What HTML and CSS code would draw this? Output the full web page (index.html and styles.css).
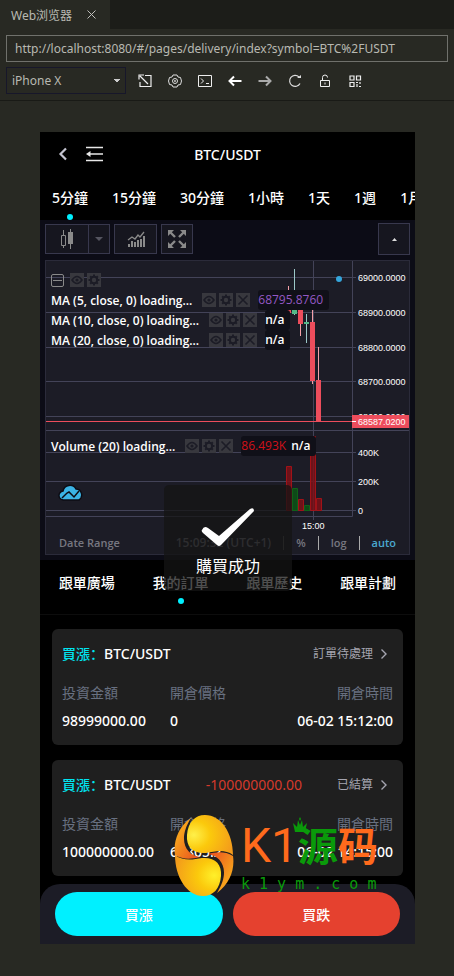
FILE: index.html
```
<!DOCTYPE html>
<html lang="zh">
<head>
    <meta charset="UTF-8">
    <meta name="viewport" content="width=device-width, initial-scale=1.0">
    <title>Web浏览器</title>
    <link rel="stylesheet" href="styles.css">
</head>
<body>
    <!-- shared icons -->
    <svg class="defs" width="0" height="0">
        <symbol id="eye" viewBox="0 0 14 14"><path d="M2 7q5-7 10 0q-5 7-10 0z" fill="none" stroke="#1c1c26" stroke-width="1.6"/><circle cx="7" cy="7" r="1.6" fill="#1c1c26"/></symbol>
        <symbol id="gear" viewBox="0 0 14 14"><circle cx="7" cy="7" r="3.2" fill="none" stroke="#1c1c26" stroke-width="2"/><path d="M7 1.5v2M7 10.5v2M1.5 7h2M10.5 7h2M3.2 3.2l1.4 1.4M9.4 9.4l1.4 1.4M3.2 10.8l1.4-1.4M9.4 4.6l1.4-1.4" stroke="#1c1c26" stroke-width="2"/></symbol>
        <symbol id="cross" viewBox="0 0 14 14"><path d="M2.5 2.5l9 9M11.5 2.5l-9 9" stroke="#1c1c26" stroke-width="1.6"/></symbol>
        <symbol id="chevron" viewBox="0 0 8 12"><path d="M1.5 1.5L6 6l-4.500 4.500" fill="none" stroke="#a5a5b0" stroke-width="1.4"/></symbol>
    </svg>

    <!-- Browser panel -->
    <header class="browser">
        <div class="tab-strip">
            <div class="tab">Web浏览器
                <button class="icon-btn" aria-label="关闭"><svg width="9" height="9" viewBox="0 0 9 9"><path d="M.5.5l8 8M8.500.5l-8 8" stroke="#c0c0bc"/></svg></button>
            </div>
        </div>
        <input class="url" type="text" aria-label="URL" value="http://localhost:8080/#/pages/delivery/index?symbol=BTC%2FUSDT">
        <div class="tools">
            <select class="device" aria-label="Device">
                <option>iPhone X</option>
            </select>
            <button class="icon-btn" aria-label="Open"><svg width="14" height="14" viewBox="0 0 14 14" fill="none" stroke="#eee"><path d="M7 1.500h6v11h-11V8M2 2l8 8M1 5.500V1h5" stroke-width="1.200"/></svg></button>
            <button class="icon-btn" aria-label="Settings"><svg width="14" height="14" viewBox="0 0 14 14" fill="none" stroke="#ddd"><path d="M5 1h4l1 2 2.500.5 1 3.500-1 3.500L10 11l-1 2H5l-1-2-2.500-.5L.5 7l1-3.500L4 3z"/><circle cx="7" cy="7" r="2.500"/><circle cx="7" cy="7" r=".6"/></svg></button>
            <button class="icon-btn" aria-label="Console"><svg width="14" height="14" viewBox="0 0 14 14" fill="none" stroke="#eee"><path d="M.5 1.500h13v11H.5zM3 4.500L5.500 7 3 9.500M8 9.500h3"/></svg></button>
            <button class="icon-btn" aria-label="Back"><svg width="14" height="14" viewBox="0 0 14 14" fill="none" stroke="#fff" stroke-width="2"><path d="M13.500 7H2M6 2.500L1.500 7 6 11.500"/></svg></button>
            <button class="icon-btn" aria-label="Forward"><svg width="14" height="14" viewBox="0 0 14 14" fill="none" stroke="#aaa" stroke-width="2"><path d="M.5 7H12M8 2.500L12.500 7 8 11.500"/></svg></button>
            <button class="icon-btn" aria-label="Reload"><svg width="14" height="14" viewBox="0 0 14 14" fill="none" stroke="#ddd" stroke-width="1.200"><path d="M12 9.500A5.500 5.500 0 1 1 11 3"/><path d="M9 4h4V1z" fill="#ddd" stroke="none"/></svg></button>
            <button class="icon-btn" aria-label="Lock"><svg width="14" height="14" viewBox="0 0 14 14" fill="none" stroke="#eee"><path d="M2.500 6.500h9v6h-9zM4.500 6V3.500q0-2.500 2.500-2.500t2.500 2.500M7 8.500v2"/></svg></button>
            <button class="icon-btn" aria-label="QR"><svg width="14" height="14" viewBox="0 0 14 14" fill="none" stroke="#eee" stroke-width="1.200"><path d="M2 2h4v4H2zM8.500 2h4v4h-4zM2 8.500h4v4H2zM8 8.500h2M12 8v2M9 10v3M11 12.500h2"/></svg></button>
        </div>
    </header>

    <main class="phone">
        <div class="nav">
            <button class="icon-btn" aria-label="返回"><svg width="10" height="14" viewBox="0 0 10 14"><path d="M8 1.500L2.500 7 8 12.500" fill="none" stroke="#c4c4d0" stroke-width="2.200"/></svg></button>
            <button class="icon-btn" aria-label="選單"><svg width="17" height="16" viewBox="0 0 17 16"><path d="M0 1.500h17M4 8h13M0 14.500h17" stroke="#e8e8e8" stroke-width="1.600"/><path d="M0 8l4.500-3v6z" fill="#e8e8e8"/></svg></button>
            <h1>BTC/USDT</h1>
        </div>

        <nav class="periods">
            <a href="#" class="active">5分鐘</a>
            <a href="#">15分鐘</a>
            <a href="#">30分鐘</a>
            <a href="#">1小時</a>
            <a href="#">1天</a>
            <a href="#">1週</a>
            <a href="#">1月</a>
        </nav>

        <!-- Chart widget -->
        <section class="widget">
            <div class="chart-tools">
                <div class="split">
                    <button aria-label="Candles"><svg width="14" height="20" viewBox="0 0 14 20"><path d="M3.500 1v18M10.500 0v20" stroke="#8a8a8a"/><path d="M1.500 6.500h4v10h-4z" fill="#16161f" stroke="#8a8a8a"/><path d="M8 3h5v12H8z" fill="#8a8a8a"/></svg></button>
                    <button class="narrow" aria-label="More"><svg width="8" height="4" viewBox="0 0 8 4"><path d="M0 0h8L4 4z" fill="#555560"/></svg></button>
                </div>
                <button class="indicators" aria-label="Indicators"><svg width="18" height="16" viewBox="0 0 18 16"><path d="M2 16v-3M5 16v-6M8 16v-5M11 16V9M14 16V8M17 16V5" stroke="#8a8a8a" stroke-width="2"/><path d="M1 9l4-3 3 2 3-4 2 2 4-5" fill="none" stroke="#8a8a8a" stroke-width="1.300"/></svg></button>
                <button class="full" aria-label="Fullscreen"><svg width="18" height="18" viewBox="0 0 18 18"><path d="M0 0h6L0 6zM18 0v6l-6-6zM0 18v-6l6 6zM18 18h-6l6-6z" fill="#8a8a8a"/><path d="M2 2l5 5M16 2l-5 5M2 16l5-5M16 16l-5-5" stroke="#8a8a8a" stroke-width="2.400"/></svg></button>
                <button class="collapse" aria-label="Collapse"><svg width="5" height="3" viewBox="0 0 5 3"><path d="M0 3h5L2.500 0z" fill="#ddd"/></svg></button>
            </div>

            <div class="chart">
                <svg class="plot" viewBox="0 0 363 270">
                    <g stroke="#434358">
                        <path d="M0 16.500H310M0 51.500H310M0 86.500H310M0 120.500H310M0 155.500H310M0 191.500H310M0 220.500H310M0 249.500H310"/>
                        <path d="M0 169.500H363M0 255.500H306.500M267.500 0V259M306.500 0V255.500"/>
                    </g>
                    <g>
                        <path d="M242.500 25V52M254.500 45V75M266.500 47V123M272.500 86V120" stroke="#f5a0a8"/>
                        <path d="M248.500 8V54M260.500 53V82" stroke="#9cc8c8"/>
                    </g>
                    <path d="M240 38h5v14h-5zM252 46h5v17h-5zM264 61h5v59h-5zM270 119h5v41h-5z" fill="#ed4d5c"/>
                    <path d="M246 49h5v4h-5zM258 61h5v2h-5z" fill="#53b987"/>
                    <path d="M0 160.500H306" stroke="#ed4d5c"/>
                    <path d="M240.500 205.500h5v44h-5zM252.500 238.500h5v11h-5zM264.500 175.500h5v74h-5zM270.500 237.500h5v12h-5z" stroke="#a11218" fill="#7d1018" fill-opacity=".85"/>
                    <path d="M246.500 227.500h5v22h-5zM258.500 244.500h5v5h-5z" stroke="#0f6218" fill="#0e4a18"/>
                    <circle cx="293" cy="18" r="3" fill="#35a6dc"/>
                    <g class="axis">
                        <text x="312" y="20">69000.0000</text>
                        <text x="312" y="55">68900.0000</text>
                        <text x="312" y="90">68800.0000</text>
                        <text x="312" y="124">68700.0000</text>
                        <text x="312" y="159">68600.0000</text>
                        <text x="312" y="195">400K</text>
                        <text x="312" y="224">200K</text>
                        <text x="312" y="253">0</text>
                        <text x="256" y="268">15:00</text>
                        <path d="M306 154h57v13h-57z" fill="#ed4d5c"/>
                        <text x="312" y="164">68587.0200</text>
                        <path d="M306 160.500h4" stroke="#fff"/>
                    </g>
                </svg>

                <div class="legend">
                    <div class="row">
                        <span class="minus"></span>
                        <span class="acts"><svg><use href="#eye"/></svg><svg><use href="#gear"/></svg></span>
                    </div>
                    <div class="row">MA (5, close, 0) loading...
                        <span class="acts"><svg><use href="#eye"/></svg><svg><use href="#gear"/></svg><svg><use href="#cross"/></svg></span>
                        <span class="val purple">68795.8760</span>
                    </div>
                    <div class="row">MA (10, close, 0) loading...
                        <span class="acts"><svg><use href="#eye"/></svg><svg><use href="#gear"/></svg><svg><use href="#cross"/></svg></span>
                        <span class="val">n/a</span>
                    </div>
                    <div class="row">MA (20, close, 0) loading...
                        <span class="acts"><svg><use href="#eye"/></svg><svg><use href="#gear"/></svg><svg><use href="#cross"/></svg></span>
                        <span class="val">n/a</span>
                    </div>
                </div>
                <div class="legend volume">
                    <div class="row">Volume (20) loading...
                        <span class="acts"><svg><use href="#eye"/></svg><svg><use href="#gear"/></svg><svg><use href="#cross"/></svg></span>
                        <span class="val"><span class="red">86.493K</span> n/a</span>
                    </div>
                </div>
                <svg class="cloud" width="26" height="18" viewBox="0 0 26 18"><path d="M6 16a4.500 4.500 0 0 1-1-9 7 7 0 0 1 13-2 6 6 0 0 1 3 11z" fill="#3bb3e4" stroke="#0c0c14" stroke-width="1.500"/><path d="M4 14l5-5 2-1 5 5 5-6" fill="none" stroke="#0c0c14" stroke-width="1.500"/></svg>

                <div class="chart-foot">
                    <span class="range">Date Range</span>
                    <span class="clock">15:09:32 (UTC+1)</span>
                    <span class="pct">%</span>
                    <span class="log">log</span>
                    <span class="auto">auto</span>
                </div>
            </div>
        </section>

        <nav class="orders-nav">
            <a href="#">跟單廣場</a>
            <a href="#" class="active">我的訂單</a>
            <a href="#">跟單歷史</a>
            <a href="#">跟單計劃</a>
        </nav>

        <section class="orders">
            <article class="card">
                <div class="card-head">
                    <div><b>買漲：</b>BTC/USDT</div>
                    <a href="#">訂單待處理<svg width="8" height="12"><use href="#chevron"/></svg></a>
                </div>
                <div class="card-grid">
                    <span class="label">投資金額</span><span class="label">開倉價格</span><span class="label">開倉時間</span>
                    <span>98999000.00</span><span>0</span><span>06-02 15:12:00</span>
                </div>
            </article>
            <article class="card">
                <div class="card-head">
                    <div><b>買漲：</b>BTC/USDT</div>
                    <div class="loss">-100000000.00</div>
                    <a href="#">已結算<svg width="8" height="12"><use href="#chevron"/></svg></a>
                </div>
                <div class="card-grid">
                    <span class="label">投資金額</span><span class="label">開倉價格</span><span class="label">開倉時間</span>
                    <span>100000000.00</span><span>68805.2</span><span>06-02 14:15:00</span>
                </div>
            </article>
        </section>

        <footer class="trade">
            <button class="up">買漲</button>
            <button class="down">買跌</button>
        </footer>

        <!-- Toast -->
        <div class="toast" role="status">
            <svg width="54" height="40" viewBox="0 0 54 40"><path d="M1 23q2-5 6-2l11 8L49 2q4-2 4 2L20 38q-2 2-4 0L2 26q-2-2-1-3z" fill="#fff"/></svg>
            購買成功
        </div>

        <!-- Site watermark -->
        <div class="watermark">
            <svg width="60" height="81" viewBox="0 0 60 81">
                <defs>
                    <radialGradient id="goldTop" cx=".15" cy=".5" r=".9"><stop offset="0" stop-color="#fff04a"/><stop offset=".4" stop-color="#fbc90c"/><stop offset="1" stop-color="#f39a1c"/></radialGradient>
                    <radialGradient id="goldLow" cx=".85" cy=".5" r=".9"><stop offset="0" stop-color="#fff02a"/><stop offset=".4" stop-color="#fbc90c"/><stop offset="1" stop-color="#f39a1c"/></radialGradient>
                    <linearGradient id="emberL" x1="0" y1="0" x2="1" y2="1"><stop offset=".3" stop-color="#f7a01c"/><stop offset="1" stop-color="#e84a20"/></linearGradient>
                    <linearGradient id="emberR" x1="1" y1="1" x2="0" y2="0"><stop offset=".3" stop-color="#f7a01c"/><stop offset="1" stop-color="#e84a20"/></linearGradient>
                </defs>
                <!-- dark gaps between the two drops -->
                <path d="M17 4C6 12 6 32 17 42L14 18zM43 77c11-8 11-28 0-38l3 24z" fill="#1f1f1f"/>
                <path d="M17 3C4 12-1 27 1 40c8 5 17 4 25 2C12 40 3 25 17 3z" fill="url(#emberL)"/>
                <path d="M43 78c13-9 18-24 16-37-8-5-17-4-25-2 14 2 23 17 9 39z" fill="url(#emberR)"/>
                <path d="M13 20C14 7 21 0 31 0c16 0 28 18 28 40-8-6-17-4-27-2-13 1-20-6-19-18z" fill="url(#goldTop)"/>
                <path d="M47 61c-1 13-8 20-18 20C13 81 1 62 1 40c8 6 17 5 27 3 13-1 20 6 19 18z" fill="url(#goldLow)"/>
            </svg>
            <div class="mark">
                <div class="mark-name">
                    <span class="latin">K1</span><span class="green">源</span><span>码</span>
                    <svg class="crown" width="16" height="16" viewBox="0 0 16 16"><path d="M3 15L1 6l4 4 1-7 2 5 2-5 1 7 4-4-2 9zM7 2l1-2 1 2-1 2z" fill="#0a9a0a"/></svg>
                </div>
                <div class="mark-url">k 1 y m . c o m</div>
            </div>
        </div>
    </main>
</body>
</html>
```

FILE: styles.css
```
* {
    box-sizing: border-box;
}

body {
    margin: 0;
    background-color: #282923;
    color: #fff;
    font-family: "Noto Sans", "Noto Sans CJK SC", sans-serif;
    font-size: 14px;
}

a {
    color: inherit;
    text-decoration: none;
}

button {
    font: inherit;
    color: inherit;
    padding: 0;
    border: none;
    background: none;
    cursor: pointer;
}

button svg {
    display: block;
}

.defs {
    position: absolute;
}

/* Browser panel */
.browser {
    height: 101px;
    border-bottom: 1px solid #191a16;
    color: #b8b9b2;
}

.tab-strip {
    height: 29px;
    background-color: #1c1d19;
}

.tab {
    display: flex;
    align-items: center;
    gap: 15px;
    width: 110px;
    height: 29px;
    padding-left: 11px;
    background-color: #282923;
    font-size: 12px;
}

.url {
    display: block;
    width: calc(100% - 12px);
    height: 27px;
    margin: 6px 6px 5px;
    padding: 0 8px;
    border: 1px solid #70716c;
    background: none;
    color: #b8b9b2;
    font-family: "Noto Sans", sans-serif;
    font-size: 12px;
}

.tools {
    display: flex;
    align-items: center;
    gap: 16px;
    padding: 0 6px;
}

.device {
    width: 120px;
    height: 27px;
    margin-right: -4px;
    padding: 0 5px;
    border: 1px solid #17172a;
    appearance: none;
    background: linear-gradient(to bottom right, #ccc 50%, transparent 50%) 110px 11px / 3px 4px no-repeat,
        linear-gradient(to bottom left, #ccc 50%, transparent 50%) 107px 11px / 3px 4px no-repeat;
    color: #b8b9b2;
    font-family: "Noto Sans", sans-serif;
    font-size: 12px;
}

/* Phone */
.phone {
    position: relative;
    height: 812px;
    margin: 31px 39px 32px 40px;
    background-color: #000;
    overflow: hidden;
}

.nav {
    display: flex;
    align-items: center;
    gap: 18px;
    height: 44px;
    padding: 0 18px;
}

.nav h1 {
    flex: 1;
    margin: 0 45px 0 -18px;
    font-size: 14px;
    font-weight: 500;
    text-align: center;
}

.periods {
    display: flex;
    gap: 24px;
    height: 44px;
    padding: 0 12px;
    line-height: 44px;
    white-space: nowrap;
    overflow: hidden;
}

.periods a,
.orders-nav a {
    position: relative;
    font-weight: 500;
}

.periods .active::after,
.orders-nav .active::after {
    content: "";
    position: absolute;
    left: 50%;
    bottom: 0;
    width: 6px;
    height: 6px;
    margin-left: -3px;
    border-radius: 50%;
    background-color: #00f0ff;
}

/* Chart */
.widget {
    height: 340px;
    padding: 3px 5px 5px;
    background-color: #0c0c16;
}

.chart-tools {
    display: flex;
    align-items: center;
    gap: 4px;
    height: 32px;
    margin-bottom: 5px;
}

.chart-tools button {
    display: flex;
    align-items: center;
    justify-content: center;
    height: 30px;
    border: 1px solid #38384d;
    background-color: #16161f;
}

.split {
    display: flex;
}

.split button {
    width: 44px;
}

.indicators {
    width: 43px;
}

.split .narrow {
    width: 21px;
    border-left: none;
}

.chart-tools .full {
    width: 32px;
}

.chart-tools .collapse {
    width: 32px;
    height: 32px;
    margin-left: auto;
}

.chart {
    position: relative;
    height: 295px;
    border: 1px solid #2b2b3a;
    background-color: #1c1c26;
}

.plot {
    display: block;
    width: 100%;
}

.axis {
    fill: #fff;
    font-family: "Liberation Sans", Arial, sans-serif;
    font-size: 9px;
}

.legend {
    position: absolute;
    top: 9px;
    left: 5px;
    font-family: "Open Sans", sans-serif;
    font-size: 12px;
    font-weight: 600;
}

.legend.volume {
    top: 175px;
}

.row {
    display: flex;
    align-items: center;
    height: 20px;
    white-space: nowrap;
}

.acts {
    display: flex;
    gap: 3px;
    margin: 0 8px 0 10px;
}

.acts svg {
    width: 14px;
    height: 14px;
    background-color: #38383e;
}

.minus {
    width: 13px;
    height: 13px;
    border: 1px solid #8a8a8a;
    border-radius: 2px;
    background: linear-gradient(#8a8a8a, #8a8a8a) center / 9px 1px no-repeat;
}

.minus + .acts {
    margin-left: 6px;
}

.val {
    padding: 0 6px 0 0;
    border-radius: 3px;
    background-color: #101018;
    line-height: 20px;
}

.purple {
    color: #9458c4;
    font-weight: 400;
}

.red {
    margin-right: 2px;
    color: #d01018;
    font-weight: 400;
}

.cloud {
    position: absolute;
    left: 12px;
    top: 223px;
}

.chart-foot {
    display: flex;
    align-items: center;
    height: 24px;
    padding: 0 13px;
    color: #777780;
    font-family: "Open Sans", sans-serif;
    font-size: 11px;
    font-weight: 600;
    line-height: 14px;
}

.clock {
    margin-left: auto;
    padding-right: 12px;
    font-size: 12px;
}

.pct,
.log,
.auto {
    padding: 0 12px;
    border-left: 1px solid #aaa;
}

.pct {
    border-color: #555;
}

.auto {
    padding-right: 0;
    color: #4aa8d0;
}

/* Orders */
.orders-nav {
    display: flex;
    justify-content: space-around;
    height: 55px;
    border-bottom: 1px solid #0d0d0d;
    line-height: 45px;
}

.orders-nav .active::after {
    bottom: 10px;
}

.orders {
    padding: 14px 12px;
}

.card {
    height: 116px;
    margin-bottom: 15px;
    padding: 13px 10px;
    border-radius: 6px;
    background-color: #1f1f1f;
    line-height: 24px;
}

.card-head {
    display: flex;
    justify-content: space-between;
    margin-bottom: 15px;
    font-weight: 500;
}

.card-head b {
    color: #00e5f0;
    font-weight: 500;
}

.card-head a {
    display: flex;
    align-items: center;
    gap: 7px;
    padding-right: 5px;
    color: #a5a5b0;
    font-size: 12px;
    font-weight: 400;
}

.loss {
    color: #d63a2c;
    font-weight: 400;
}

.card-grid {
    display: grid;
    grid-template-columns: 108px 1fr auto;
    row-gap: 4px;
    font-weight: 500;
}

.card-grid span:nth-child(3n) {
    text-align: right;
}

.card-grid .label {
    color: #687080;
    font-weight: 400;
}

.trade {
    position: absolute;
    left: 0;
    right: 0;
    bottom: 0;
    display: flex;
    gap: 10px;
    padding: 8px 15px;
    border-radius: 20px 20px 0 0;
    background-color: #1c1c26;
}

.trade button {
    flex: 1;
    height: 44px;
    border-radius: 22px;
    font-weight: 500;
}

.trade .up {
    background-color: #00f0ff;
}

.trade .down {
    background-color: #e5412f;
}

.toast {
    position: absolute;
    top: 353px;
    left: 124px;
    display: flex;
    flex-direction: column;
    align-items: center;
    width: 128px;
    height: 106px;
    padding-top: 22px;
    border-radius: 5px;
    background-color: rgba(20, 20, 20, 0.75);
    font-size: 16px;
    line-height: 38px;
}

/* Watermark */
.watermark {
    position: absolute;
    top: 683px;
    left: 134px;
    display: flex;
    gap: 7px;
    color: #ff6a1c;
}

.mark-name {
    position: relative;
    display: flex;
    align-items: center;
    height: 61px;
    font-size: 40px;
    font-weight: 700;
    line-height: 61px;
}

.latin {
    font-family: Roboto, sans-serif;
    font-size: 48px;
    font-weight: 400;
}

.green {
    color: #0a9a0a;
}

.crown {
    position: absolute;
    top: 2px;
    left: 51px;
}

.mark-url {
    color: #0a9a0a;
    font-family: "DejaVu Sans Mono", monospace;
    font-size: 15px;
    line-height: 16px;
    white-space: nowrap;
}
```
